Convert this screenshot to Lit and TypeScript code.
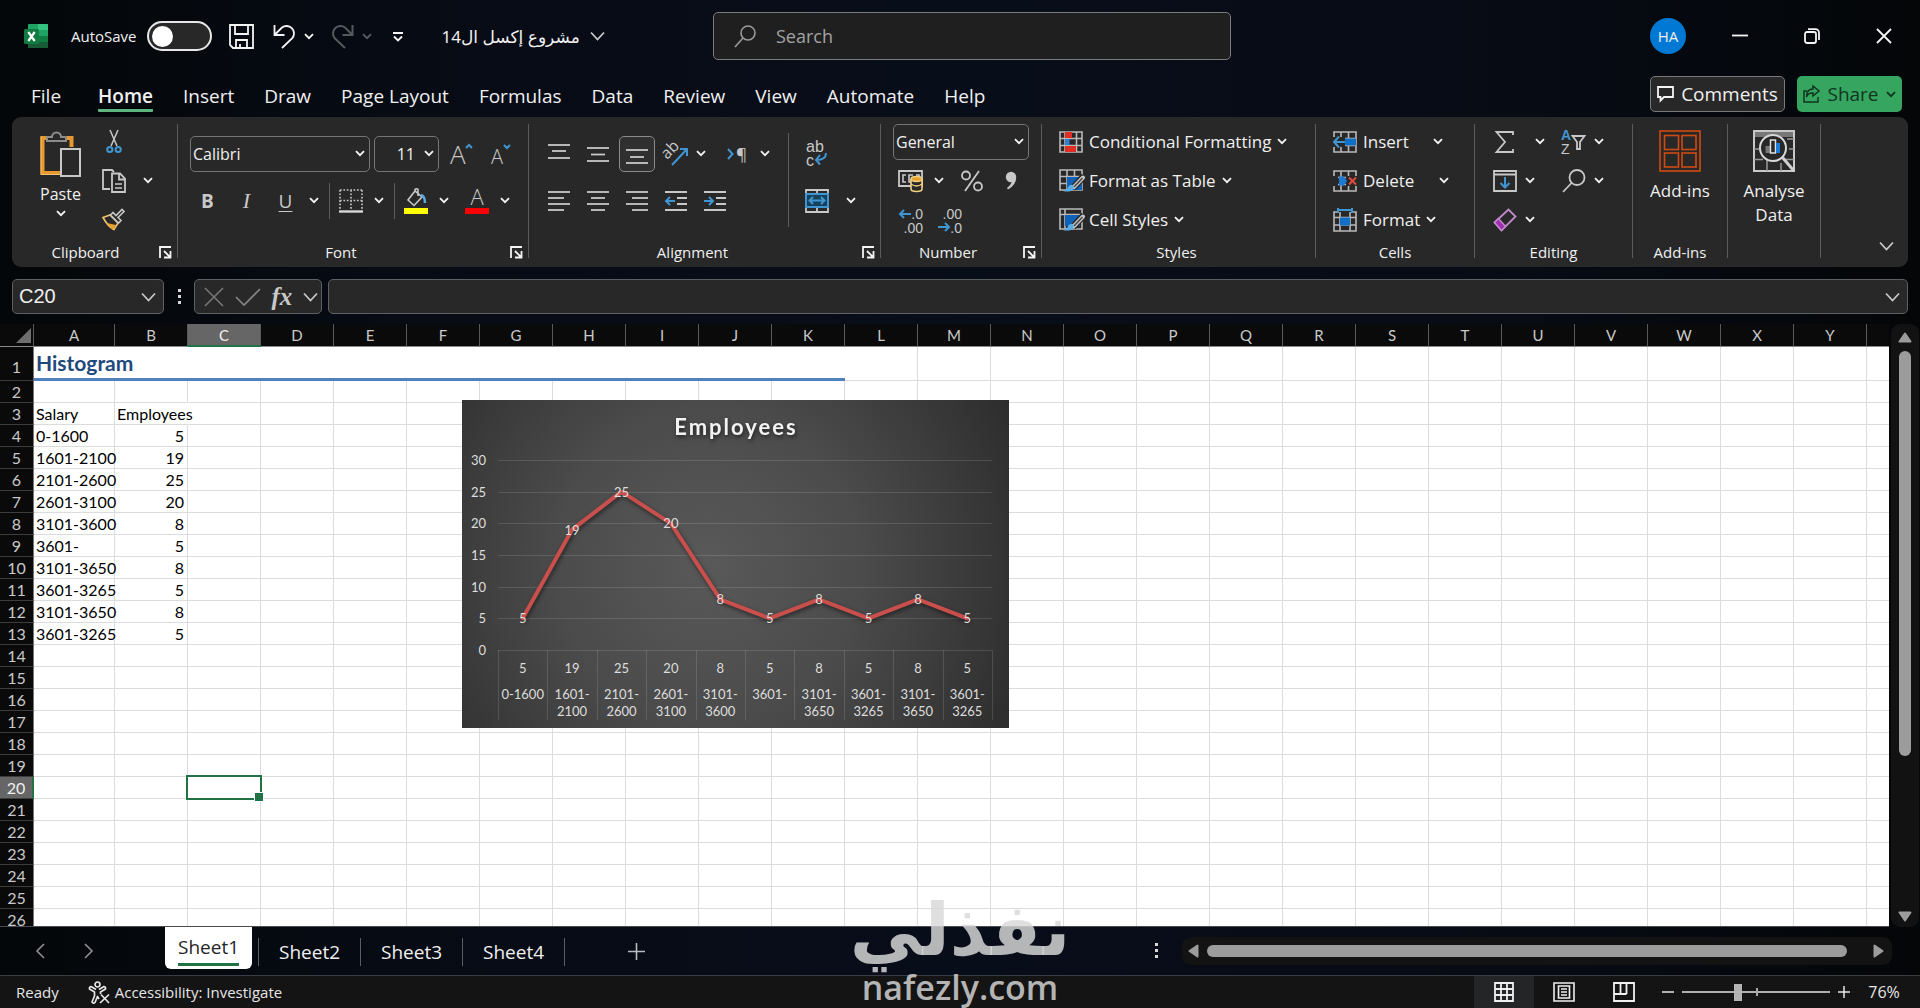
import { LitElement, html, svg, css, nothing } from "lit";
import { customElement } from "lit/decorators.js";

const icon = (w: number, h: number, body: unknown) =>
  html`<svg class="ic" width=${w} height=${h} viewBox="0 0 ${w} ${h}" aria-hidden="true">${body}</svg>`;

const chevron = (w = 10) =>
  w > 10
    ? icon(15, 10, svg`<path class="s2" d="M1 1.5 7.5 8.5 14 1.5"/>`)
    : icon(10, 7, svg`<path class="w2" d="M1 1.2 5 5.2 9 1.2"/>`);

const lines = (rows: [number, number, number][]) =>
  icon(22, 22, rows.map(([y, a, b]) => svg`<path class="s2" d="M${a} ${y}H${b}"/>`));

const icons = {
  logo: icon(24, 24, svg`
    <rect x="4" y="0" width="20" height="24" rx="1" fill="#21a366"/>
    <path d="M14 0h9a1 1 0 0 1 1 1v5H14z" fill="#33c481"/><path d="M14 6h10v6H14z" fill="#21a366"/>
    <path d="M4 12h10v12H5a1 1 0 0 1-1-1z" fill="#185c37"/><path d="M14 12h10v6H14z" fill="#107c41"/>
    <path d="M14 18h10v5a1 1 0 0 1-1 1h-9z" fill="#185c37"/>
    <rect x="0" y="5" width="15" height="15" rx="1.5" fill="#107c41"/>
    <path d="M4.300 8 10.700 17M10.700 8 4.300 17" stroke="#fff" stroke-width="2.200"/>`),
  save: icon(25, 25, svg`<path class="w2" d="M1 1h23v23H4l-3-3z"/><path class="w2" d="M6 1v9h13V1M7 24v-8h11v8M11 24v-4"/>`),
  undo: icon(23, 25, svg`<path class="w2" d="M1.500 1v10h10M2 10.500 9 3.500A7.500 7.500 0 0 1 19.500 14L9 24"/>`),
  redo: icon(23, 25, svg`<path d="M21.500 1v10h-10M21 10.500 14 3.500A7.500 7.500 0 0 0 3.500 14L14 24" fill="none" stroke="#55585d" stroke-width="2"/>`),
  more: icon(12, 10, svg`<path class="w2" d="M1 1H11M2 4.500 6 8.500 10 4.500"/>`),
  search: icon(22, 23, svg`<g fill="none" stroke="#9b9b9b" stroke-width="1.600"><circle cx="14" cy="8" r="7"/><path d="M9 13 1 22"/></g>`),
  min: icon(16, 16, svg`<path class="w2" d="M0 7.500H16"/>`),
  restore: icon(16, 16, svg`<rect class="w2" x="1" y="4" width="11" height="11" rx="2"/><path class="w2" d="M4 1.200h7.500a3.500 3.500 0 0 1 3.500 3.500V12"/>`),
  close: icon(16, 16, svg`<path class="w2" d="M1 1 15 15M15 1 1 15"/>`),
  comment: icon(17, 16, svg`<path class="w2" d="M1 1h15v10H7l-3.500 3.500V11H1z"/>`),
  share: icon(17, 18, svg`<path d="M4 6H1v11h14v-5M10 1l6 5-6 5V8C6 8 4 9.500 3.500 12 3.500 7 6 4 10 4z" fill="none" stroke="#10351f" stroke-width="1.500"/>`),
  paste: icon(42, 48, svg`
    <path d="M9 8H2.500V43H20M26 8h5.500V17" fill="none" stroke="#e8982c" stroke-width="4"/>
    <path d="M1 6.500V44.500H20" fill="none" stroke="#f3c173" stroke-width="1"/>
    <path d="M7 11V7h5a4.500 4.500 0 0 1 9 0h5v4z" fill="#282828" stroke="#8c8c8c" stroke-width="2"/>
    <rect x="21" y="19" width="19" height="27" fill="#282828" stroke="#c8c8c8" stroke-width="2"/>`),
  cut: icon(16, 25, svg`<path d="M4 1 11 17M12 1 5 17" stroke="#c8c8c8" stroke-width="1.500"/><g fill="none" stroke="#3f96d2" stroke-width="2"><circle cx="3.800" cy="20.500" r="2.600"/><circle cx="12.200" cy="20.500" r="2.600"/></g>`),
  copy: icon(24, 24, svg`<path class="s2" d="M8 20H1V1h9l2 2"/><path class="s2" d="M10 4.500h8l5 5V23H10zM17 4.500v6h6"/><path d="M13 15h7M13 19h7" stroke="#c8c8c8" stroke-width="1.500"/>`),
  painter: icon(25, 23, svg`<path d="M2 9.500 9 7l8 8-4 6.500C8 19 5 15 2 9.500z" fill="#282828" stroke="#f0c26e" stroke-width="1.600"/><path d="M6 15l9 2-3.500 5z" fill="#e8a02c"/><path d="M9.500 7 12 4.500l3 3 6-6 2 2-6 6 3 3-2.500 2.500z" fill="#282828" stroke="#c8c8c8" stroke-width="1.600"/>`),
  launcher: icon(13, 13, svg`<path class="w2" d="M1 12V1H12M5 5 11 11M11.500 5V11.500H5"/>`),
  growFont: icon(24, 26, svg`<text x="0" y="23" font-size="26" class="tx" font-weight="300">A</text><path class="b2" d="M16 7 19 4 22 7"/>`),
  shrinkFont: icon(22, 26, svg`<text x="1" y="23" font-size="20" class="tx" font-weight="300">A</text><path class="b2" d="M14 4 17 7 20 4"/>`),
  borders: icon(24, 24, svg`<g fill="none" stroke="#c8c8c8" stroke-width="1.600" stroke-dasharray="1.700 1.700"><path d="M1 1H23M1 1V21M23 1V21M12 1V21M1 11.500H23"/></g><path d="M0 22.500H24" stroke="#d8d8d8" stroke-width="2.400"/>`),
  fill: icon(24, 26, svg`<path d="M11 3 4 12l6 5.500 8-8.500zM11 3V1.500a1.800 1.800 0 0 1 3 0V8" fill="none" stroke="#c8c8c8" stroke-width="1.600"/><path d="M17 7q4 1 4 8" fill="none" stroke="#5aa9e0" stroke-width="2.500"/><rect y="20" width="24" height="6" fill="#ff0"/>`),
  fontColor: icon(24, 26, svg`<text x="12" y="17" text-anchor="middle" font-size="22" class="tx" font-weight="300">A</text><rect y="20" width="24" height="6" fill="#f00"/>`),
  top: lines([[2, 0, 22], [8, 4, 18], [15, 0, 22]]),
  middle: lines([[5, 0, 22], [11.5, 4, 18], [18, 0, 22]]),
  bottom: lines([[7, 0, 22], [14, 4, 18], [20, 0, 22]]),
  left: lines([[2, 0, 22], [8, 0, 16], [14, 0, 22], [20, 0, 16]]),
  center: lines([[2, 0, 22], [8, 4, 18], [14, 0, 22], [20, 4, 18]]),
  right: lines([[2, 0, 22], [8, 6, 22], [14, 0, 22], [20, 6, 22]]),
  outdent: icon(22, 22, svg`<path class="s2" d="M0 2H22M12 8H22M12 14H22M0 20H22"/><path class="b2" d="M10 11H1M5 7 1 11 5 15"/>`),
  indent: icon(22, 22, svg`<path class="s2" d="M0 2H22M12 8H22M12 14H22M0 20H22"/><path class="b2" d="M0 11H9M5 7 9 11 5 15"/>`),
  orient: icon(26, 26, svg`<text x="1" y="16" font-size="16" class="tx" transform="rotate(-45 6 14)">ab</text><path class="b2" d="M9 24 24 8M17 8H24V15"/>`),
  rtl: icon(20, 20, svg`<path class="b2" d="M1 5 5.500 10 1 15"/><text x="9" y="16" font-size="17" class="tx">¶</text>`),
  wrap: icon(22, 26, svg`<text x="0" y="11" font-size="16" class="tx li">ab</text><text x="0" y="25" font-size="16" class="tx li">c</text><path class="b2" d="M20 12q0 7-10 7M14 14 10 19 14 23.500"/>`),
  merge: icon(24, 24, svg`<path class="s2" d="M1 1H23V23H1zM12 1V5M12 19V23"/><rect x="1" y="5" width="22" height="13" fill="#17405c" stroke="#3f96d2" stroke-width="2"/><path class="b2" d="M4 11.500H20M8 8 4.500 11.500 8 15M16 8 19.500 11.500 16 15"/>`),
  currency: icon(26, 22, svg`<path class="s2" d="M1 1H24V16H1z"/><path d="M8 5H5V12H8M15 5H11V12H13M18 5H21V8" fill="none" stroke="#c8c8c8" stroke-width="1.600"/><path d="M13 9v10q0 2.500 5.500 2.500T24 19V9" fill="#282828" stroke="#f0d080" stroke-width="1.600"/><ellipse cx="18.500" cy="9" rx="5.500" ry="2.400" fill="#e8a02c" stroke="#f0d080" stroke-width="1.500"/><path d="M13 14q5.500 4 11 0" fill="none" stroke="#f0d080" stroke-width="1.500"/>`),
  percent: icon(24, 24, svg`<g fill="none" stroke="#c8c8c8" stroke-width="1.800"><circle cx="6" cy="6.500" r="4"/><circle cx="18" cy="17.500" r="4"/><path d="M19 2 5 22"/></g>`),
  comma: icon(14, 22, svg`<circle cx="7" cy="7" r="5.200" fill="#c8c8c8"/><path d="M12.200 7q0 8-8.200 12.500L3 18Q8 14 8 10z" fill="#c8c8c8"/>`),
  incDec: icon(26, 26, svg`<path class="b2" d="M13 7H2M6 3 2 7 6 11"/><text x="25" y="12" text-anchor="end" font-size="14" class="tx li">.0</text><text x="25" y="26" text-anchor="end" font-size="14" class="tx li">.00</text>`),
  decDec: icon(26, 26, svg`<path class="b2" d="M1 20H12M8 16 12 20 8 24"/><text x="25" y="12" text-anchor="end" font-size="14" class="tx li">.00</text><text x="25" y="26" text-anchor="end" font-size="14" class="tx li">.0</text>`),
  cond: icon(24, 22, svg`<path class="g2" d="M1 1H23V21H1zM1 7.500H23M1 14.500H23M6 1V21M17.500 1V21"/><rect x="6" y="1" width="7" height="6" fill="#e02d26"/><rect x="6" y="15" width="11" height="6" fill="#e02d26"/><rect x="6" y="8" width="4.500" height="6" fill="#2f7fd0"/>`),
  fmtTable: icon(24, 23, svg`<path class="g2" d="M1 1H23V21H1zM1 7.500H23M1 14.500H23M8 1V21M15.500 1V21"/><path d="M8 8H23V21H8z" fill="#0f62b5"/><path d="M25 7 14 19" stroke="#282828" stroke-width="7"/><path d="M24 8.500 15 18" stroke="#c8c8c8" stroke-width="4" stroke-linecap="round"/><path d="M23.500 9 15 18" stroke="#444" stroke-width="1.500"/><path d="M14 16q2 4-2 6-4 1-8 0 4-1 5-4 2-3 5-2z" fill="#58aee8"/>`),
  cellStyle: icon(24, 23, svg`<path class="g2" d="M1 1H23V21H1zM1 6.500H23M6 1V21"/><path d="M6 7H21V18H6z" fill="#0f62b5"/><path d="M25 7 14 19" stroke="#282828" stroke-width="7"/><path d="M24 8.500 15 18" stroke="#c8c8c8" stroke-width="4" stroke-linecap="round"/><path d="M23.500 9 15 18" stroke="#444" stroke-width="1.500"/><path d="M14 16q2 4-2 6-4 1-8 0 4-1 5-4 2-3 5-2z" fill="#58aee8"/>`),
  insert: icon(24, 22, svg`<path class="g2" d="M1 1H23V21H1zM1 7.500H23M1 14.500H23M8 1V21M15.500 1V21"/><path d="M10 7.500H23V14.500H10z" fill="#0f6fc9"/><path d="M0 6h12v10H0z" fill="#282828"/><path class="b2" d="M12 11H1M6 5.500 1 11 6 16.500"/>`),
  del: icon(24, 22, svg`<path class="g2" d="M1 1H23V21H1zM1 7.500H23M1 14.500H23M8 1V21M15.500 1V21"/><path d="M0 6h5v10H0zM13 6h11v10H13z" fill="#282828"/><path d="M6 6.500H11l3 4.500-3 4.500H6z" fill="#1b7ad6"/><path d="M16 7.500 23 14.500M23 7.500 16 14.500" stroke="#e04a3f" stroke-width="2"/>`),
  format: icon(24, 24, svg`<path class="g2" d="M4 4H1V23H23V4H20M1 9.500H23M1 17H23M7 4V23M17 4V23"/><rect x="7" y="9.500" width="10" height="8" fill="#0f6fc9"/><path class="b2" d="M5 2H19M5 0V5M19 0V5"/>`),
  sum: icon(20, 22, svg`<path class="s2" d="M18 4V1H1.500L10 11 1.500 21H18V18"/>`),
  sort: icon(25, 26, svg`<text x="0" y="11" font-size="14" font-weight="700" fill="#3f96d2" class="li">A</text><text x="0" y="25" font-size="14" class="tx li">Z</text><path class="s2" d="M11.500 7H23.500L19 13V20H16V13z"/>`),
  down: icon(24, 22, svg`<path class="s2" d="M1 1H23V21H1zM1 4.500H23"/><path class="b2" d="M12 7V17.500M7.500 13 12 17.500 16.500 13"/>`),
  find: icon(24, 24, svg`<circle class="s2" cx="15" cy="8.500" r="7.500"/><path class="s2" d="M9.500 14 1 23"/>`),
  erase: icon(24, 24, svg`<path d="M1.500 14.500 15.500 1.500 22.500 8.500 8.500 22.500z" fill="none" stroke="#c488cc" stroke-width="1.800"/><path d="M1.500 14.500 5.500 10.500 12.500 18.500 8.500 22.500z" fill="#9b2fae" stroke="#c488cc" stroke-width="1.500"/>`),
  addins: icon(42, 42, svg`<g fill="none" stroke="#d04a12" stroke-width="1.600"><rect x="1" y="1" width="40" height="40"/><rect x="5.500" y="5.500" width="14" height="14"/><rect x="23" y="5.500" width="14" height="14"/><rect x="5.500" y="23" width="14" height="14"/><rect x="23" y="23" width="14" height="14"/></g>`),
  analyse: icon(42, 42, svg`<rect x="1" y="1" width="40" height="40" fill="none" stroke="#c8c8c8" stroke-width="2"/><path d="M2 4.500H40" stroke="#777" stroke-width="5"/><path d="M1 19H6M36 19H41M1 29.500H10M30 29.500H41M14 30V41M28 33V41M34 9H41" stroke="#999" stroke-width="1.500"/><circle cx="20" cy="18" r="13" fill="#282828" stroke="#d8d8d8" stroke-width="2"/><rect x="12.500" y="16" width="4.500" height="7" fill="#777"/><rect x="17.500" y="10" width="5" height="13" fill="#282828" stroke="#e0e0e0" stroke-width="1.500"/><rect x="23" y="13" width="4" height="10" fill="#1f7fd8"/><path d="M29.500 27.500 41 41" stroke="#d0d0d0" stroke-width="3"/>`),
  cancel: icon(20, 20, svg`<path d="M1 1 19 19M19 1 1 19" stroke="#777" stroke-width="1.600"/>`),
  check: icon(26, 18, svg`<path d="M1 9 9 17 25 1" fill="none" stroke="#858585" stroke-width="1.600"/>`),
  prev: icon(9, 16, svg`<path d="M8 1 1 8 8 15" fill="none" stroke="#8b8f98" stroke-width="1.600"/>`),
  next: icon(9, 16, svg`<path d="M1 1 8 8 1 15" fill="none" stroke="#8b8f98" stroke-width="1.600"/>`),
  plus: icon(17, 17, svg`<path d="M8.500 0V17M0 8.500H17" stroke="#b8bbc0" stroke-width="1.600"/>`),
  zoomIn: icon(12, 12, svg`<path d="M6 0V12M0 6H12" stroke="#e6e6e6" stroke-width="1.500"/>`),
  zoomOut: icon(12, 12, svg`<path d="M0 6H12" stroke="#e6e6e6" stroke-width="1.500"/>`),
  dots: icon(4, 16, svg`<path d="M0 0h3v3H0zM0 6h3v3H0zM0 12h3v3H0z" fill="#d8d8d8"/>`),
  access: icon(22, 23, svg`<g fill="none" stroke="#e6e6e6" stroke-width="1.700" stroke-linejoin="round"><circle cx="9.500" cy="3.500" r="2.500"/><path d="M8 8.500 3 5.500Q1 6 1.500 8L6.500 11V15L4 21q1.500 2 3 .5L9.500 15.500 11 18M11 8.500 16 5.500q2 .5 1.500 2.500L12.500 11V13"/><path d="M13 13.500 21 22M21 13.500 12 22"/></g>`),
  viewGrid: icon(20, 20, svg`<path d="M1 1H19V19H1zM1 7H19M1 13H19M7 1V19M13 1V19" fill="none" stroke="#f0f0f0" stroke-width="1.800"/>`),
  viewPage: icon(22, 20, svg`<path d="M1 1H21V19H1zM5.500 4H16.500V16H5.500zM8 7H14M8 10H14M8 13H14" fill="none" stroke="#f0f0f0" stroke-width="1.600"/>`),
  viewBreak: icon(22, 20, svg`<path d="M1 1H21V19H1zM7.500 1V12M13.500 1V12M1 12H13.500" fill="none" stroke="#f0f0f0" stroke-width="1.800"/>`),
  triUp: icon(14, 11, svg`<path class="tri" d="M7 1.500 12.500 9.500H1.500z"/>`),
  triDown: icon(14, 11, svg`<path class="tri" d="M7 9.500 12.500 1.500H1.500z"/>`),
  triLeft: icon(11, 14, svg`<path class="tri" d="M1.500 7 9.500 1.500V12.500z"/>`),
  triRight: icon(11, 14, svg`<path class="tri" d="M9.500 7 1.500 1.500V12.500z"/>`),
};

const shared = css`
  :host, * { box-sizing: border-box; }
  button, select, input { font: inherit; color: inherit; background: none; border: 0; padding: 0; margin: 0; }
  button { display: flex; align-items: center; justify-content: center; white-space: nowrap; }
  .ic { display: block; flex: none; overflow: visible; }
  .s2 { fill: none; stroke: #c8c8c8; stroke-width: 1.8; }
  .w2 { fill: none; stroke: #f4f4f4; stroke-width: 1.8; }
  .g2 { fill: none; stroke: #b9b9b9; stroke-width: 1.6; }
  .b2 { fill: none; stroke: #3f96d2; stroke-width: 2; }
  .tx { fill: #c8c8c8; font-family: "Open Sans", sans-serif; }
  .li { font-family: "Liberation Sans", sans-serif; }
  .tri { fill: #9c9c9c; stroke: #9c9c9c; stroke-width: 2; stroke-linejoin: round; }
`;

@customElement("title-bar")
class TitleBar extends LitElement {
  static styles = [shared, css`
    :host { display: grid; grid-template-columns: 1fr 518px 1fr; align-items: center; height: 72px; padding-left: 24px; }
    .left { display: flex; align-items: center; }
    .auto { display: flex; align-items: center; gap: 10px; margin: 0 17px 0 23px; font-size: 15px; }
    .toggle { appearance: none; width: 65px; height: 30px; border: 2px solid #e8e8e8; border-radius: 15px; background: #282828; display: flex; align-items: center; padding-left: 3px; }
    .toggle::before { content: ""; width: 21px; height: 21px; border-radius: 50%; background: #fff; }
    .pair { display: flex; gap: 8px; margin-left: 19px; }
    .pair + .pair { margin-left: 17px; }
    .dim { opacity: 0.35; }
    .more { margin: 2px 38px 0 20px; }
    .doc { gap: 10px; font-size: 17px; font-family: "Noto Sans", "DejaVu Sans", sans-serif; }
    .search { display: flex; align-items: center; gap: 20px; height: 48px; padding: 0 20px; border: 1px solid #7b7b7b; border-radius: 5px; background: #1f1f1f; }
    .search input { flex: 1; min-width: 0; outline: none; font-size: 18px; }
    .search input::placeholder { color: #a3a3a3; opacity: 1; }
    .right { display: flex; align-items: center; justify-content: flex-end; gap: 28px; padding-right: 14px; }
    .avatar { width: 36px; height: 36px; margin-right: 4px; border-radius: 50%; background: #0078d4; font-size: 15px; }
    .win { width: 44px; height: 36px; }
  `];
  render() {
    return html`
      <div class="left">
        ${icons.logo}
        <label class="auto">AutoSave <input class="toggle" type="checkbox" role="switch" /></label>
        <button aria-label="Save">${icons.save}</button>
        <div class="pair"><button aria-label="Undo">${icons.undo}</button><button aria-label="Undo list">${chevron()}</button></div>
        <div class="pair"><button aria-label="Redo">${icons.redo}</button><button class="dim" aria-label="Redo list">${chevron()}</button></div>
        <button class="more" aria-label="Customise toolbar">${icons.more}</button>
        <button class="doc"><bdi>مشروع إكسل ال14</bdi>${chevron(15)}</button>
      </div>
      <label class="search">${icons.search}<input type="text" placeholder="Search" aria-label="Search" /></label>
      <div class="right">
        <button class="avatar" aria-label="Account">HA</button>
        <button class="win" aria-label="Minimise">${icons.min}</button>
        <button class="win" aria-label="Restore">${icons.restore}</button>
        <button class="win" aria-label="Close">${icons.close}</button>
      </div>`;
  }
}

const TABS = ["File", "Home", "Insert", "Draw", "Page Layout", "Formulas", "Data", "Review", "View", "Automate", "Help"];

@customElement("ribbon-tabs")
class RibbonTabs extends LitElement {
  static styles = [shared, css`
    :host { display: flex; justify-content: space-between; align-items: flex-start; height: 45px; padding: 4px 18px 0 31px; font-size: 19px; }
    nav { display: flex; gap: 30px; }
    .tab { height: 36px; padding-top: 7px; border-bottom: 3px solid transparent; border-radius: 1px; }
    .on { margin-left: 7px; font-weight: 600; border-color: #5fb37e; }
    .acts { display: flex; gap: 12px; }
    .act { height: 36px; border-radius: 5px; gap: 7px; }
    .comments { width: 135px; border: 1px solid #7b7b7b; background: #282828; }
    .share { width: 105px; background: #36a55f; color: #10351f; }
    .share .w2 { stroke: #10351f; }
  `];
  render() {
    return html`
      <nav>${TABS.map((t) => html`<button class="tab ${t === "Home" ? "on" : ""}">${t}</button>`)}</nav>
      <div class="acts">
        <button class="act comments">${icons.comment}Comments</button>
        <button class="act share">${icons.share}Share ${chevron()}</button>
      </div>`;
  }
}

const btn = (name: string, ic: unknown, cls = "") => html`<button class="b ${cls}" aria-label=${name}>${ic}</button>`;
const drop = (name: string, cls = "") => html`<button class="c ${cls}" aria-label="${name} options">${chevron()}</button>`;
const group = (cls: string, label: string, body: unknown, launcher = false) => html`
  <section class="group ${cls}">
    <div class="body">${body}</div>
    <footer>${label}${launcher ? html`<button class="launch" aria-label="${label} settings">${icons.launcher}</button>` : nothing}</footer>
  </section>
  <div class="rule"></div>`;
const picker = (cls: string, name: string, value: string) => html`
  <div class="field ${cls}"><select aria-label=${name}><option>${value}</option></select>${chevron()}</div>`;
const wide = (ic: unknown, text: string, cls = "") => html`<button class="wide ${cls}">${ic}<span>${text}</span>${chevron()}</button>`;

@customElement("ribbon-panel")
class RibbonPanel extends LitElement {
  static styles = [shared, css`
    :host { display: flex; height: 150px; margin: 0 12px; border-radius: 9px; background: #282828; font-size: 17px; }
    .group { display: flex; flex-direction: column; flex: none; }
    .rule { width: 1px; margin: 7px 0 9px; background: #5c5c5c; }
    .body { display: flex; height: 122px; }
    footer { position: relative; height: 27px; line-height: 27px; text-align: center; font-size: 15px; }
    .launch { position: absolute; right: 5px; top: 7px; }
    .row { display: flex; align-items: center; height: 47px; }
    .three .row { height: 39px; }
    .three { padding-top: 5px; }
    .two { padding-top: 13px; }
    .b { width: 39px; height: 36px; }
    .c { width: 18px; height: 36px; }
    .slim { width: 12px; }
    .on { border: 1px solid #8a8a8a; border-radius: 5px; width: 36px; margin: 0 1px 0 2px; background: #303030; }
    .v { width: 1px; height: 36px; background: #5c5c5c; margin: 0 1px 0 6px; }
    .field { display: flex; align-items: center; height: 36px; padding-right: 4px; border: 1px solid #767676; border-radius: 5px; font-size: 16px; }
    .field select { appearance: none; flex: 1; min-width: 0; height: 100%; padding-left: 2px; outline: none; }
    .field option { background: #282828; }
    .big { flex-direction: column; gap: 7px; line-height: 24px; white-space: normal; }
    .wide { gap: 6px; justify-content: flex-start; height: 36px; }

    .clip { width: 165px; }
    .clip .body { gap: 12px; padding-left: 27px; }
    .clip .big { justify-content: flex-start; padding-top: 13px; gap: 4px; width: 43px; font-size: 16px; }
    .clip footer { padding-right: 18px; }
    .font { width: 350px; }
    .font .two { padding-left: 10px; }
    .face { width: 180px; margin: 0 4px 0 2px; }
    .size { width: 65px; }
    .size select { text-align-last: right; padding-right: 9px; }
    .gap4 { margin-left: 4px; }
    .gap3 { margin-left: 3px; }
    .letter { font-size: 19px; color: #c8c8c8; }
    .bold { font-weight: 700; }
    .ital { font-style: italic; font-family: "Liberation Serif", serif; font-size: 22px; }
    .under { text-decoration: underline; text-underline-offset: 3px; }
    .font footer, .align footer { padding-right: 24px; }
    .align { width: 351px; }
    .align .two { padding-left: 10px; width: 259px; }
    .align .two + .vr + .two { padding-left: 8px; width: auto; }
    .vr { width: 1px; height: 94px; margin-top: 16px; background: #5c5c5c; }
    .gap10 { margin-left: 10px; }
    .gap6 { margin-left: 6px; }
    .number { width: 160px; }
    .number .three { padding-left: 10px; }
    .number footer { padding-right: 26px; }
    .fmt { width: 136px; margin-left: 2px; }
    .styles { width: 273px; }
    .styles .three, .cells .three { padding-left: 17px; }
    .styles footer { padding-right: 4px; }
    .cells { width: 158px; }
    .far { width: 110px; }
    .farther { width: 116px; }
    .far span, .farther span { flex: 1; text-align: left; }
    .edit { width: 157px; }
    .edit .three { padding-left: 10px; width: 87px; }
    .edit .three + .three { padding-left: 0; }
    .add { width: 94px; }
    .ana { width: 92px; }
    .add .big, .ana .big { flex: 1; justify-content: flex-start; padding-top: 13px; }
    .end { flex: 1; display: flex; justify-content: flex-end; align-items: flex-end; padding: 0 14px 16px 0; }
  `];
  render() {
    return html`
      ${group("clip", "Clipboard", html`
        <button class="big">${icons.paste}<span>Paste</span>${chevron()}</button>
        <div class="three">
          <div class="row">${btn("Cut", icons.cut)}</div>
          <div class="row">${btn("Copy", icons.copy)}${drop("Copy", "gap6")}</div>
          <div class="row">${btn("Format painter", icons.painter)}</div>
        </div>`, true)}
      ${group("font", "Font", html`
        <div class="two">
          <div class="row">${picker("face", "Font name", "Calibri")}${picker("size", "Font size", "11")}
            ${btn("Increase font size", icons.growFont, "gap3")}${btn("Decrease font size", icons.shrinkFont)}</div>
          <div class="row">
            <button class="b letter bold">B</button><button class="b letter ital">I</button><button class="b letter under">U</button>${drop("Underline")}
            <div class="v"></div>${btn("Borders", icons.borders)}${drop("Borders")}
            <div class="v"></div>${btn("Fill colour", icons.fill)}${drop("Fill colour")}${btn("Font colour", icons.fontColor, "gap4")}${drop("Font colour")}
          </div>
        </div>`, true)}
      ${group("align", "Alignment", html`
        <div class="two">
          <div class="row">${btn("Top align", icons.top)}${btn("Middle align", icons.middle)}${btn("Bottom align", icons.bottom, "on")}
            ${btn("Orientation", icons.orient)}${drop("Orientation", "slim")}${btn("Text direction", icons.rtl, "gap10")}${drop("Text direction")}</div>
          <div class="row">${btn("Align left", icons.left)}${btn("Centre", icons.center)}${btn("Align right", icons.right)}
            ${btn("Decrease indent", icons.outdent)}${btn("Increase indent", icons.indent)}</div>
        </div>
        <div class="vr"></div>
        <div class="two">
          <div class="row">${btn("Wrap text", icons.wrap)}</div>
          <div class="row">${btn("Merge", icons.merge)}${drop("Merge", "gap6")}</div>
        </div>`, true)}
      ${group("number", "Number", html`
        <div class="three">
          <div class="row">${picker("fmt", "Number format", "General")}</div>
          <div class="row">${btn("Currency", icons.currency)}${drop("Currency")}${btn("Percent", icons.percent, "gap4")}${btn("Comma style", icons.comma)}</div>
          <div class="row">${btn("Increase decimal", icons.incDec)}${btn("Decrease decimal", icons.decDec)}</div>
        </div>`, true)}
      ${group("styles", "Styles", html`
        <div class="three">
          <div class="row">${wide(icons.cond, "Conditional Formatting")}</div>
          <div class="row">${wide(icons.fmtTable, "Format as Table")}</div>
          <div class="row">${wide(icons.cellStyle, "Cell Styles")}</div>
        </div>`)}
      ${group("cells", "Cells", html`
        <div class="three">
          <div class="row">${wide(icons.insert, "Insert", "far")}</div>
          <div class="row">${wide(icons.del, "Delete", "farther")}</div>
          <div class="row">${wide(icons.format, "Format")}</div>
        </div>`)}
      ${group("edit", "Editing", html`
        <div class="three">
          <div class="row">${btn("AutoSum", icons.sum)}${drop("AutoSum", "slim gap10")}</div>
          <div class="row">${btn("Fill", icons.down)}${drop("Fill", "slim")}</div>
          <div class="row">${btn("Clear", icons.erase)}${drop("Clear", "slim")}</div>
        </div>
        <div class="three">
          <div class="row">${btn("Sort and filter", icons.sort)}${drop("Sort", "slim")}</div>
          <div class="row">${btn("Find and select", icons.find)}${drop("Find", "slim")}</div>
        </div>`)}
      ${group("add", "Add-ins", html`<button class="big">${icons.addins}<span>Add-ins</span></button>`)}
      ${group("ana", "", html`<button class="big">${icons.analyse}<span>Analyse<br />Data</span></button>`)}
      <div class="end"><button aria-label="Collapse ribbon">${chevron(15)}</button></div>`;
  }
}

@customElement("formula-bar")
class FormulaBar extends LitElement {
  static styles = [shared, css`
    :host { display: flex; align-items: center; height: 35px; margin: 12px 12px 10px; }
    .box { display: flex; align-items: center; height: 35px; border: 1px solid #5f6064; border-radius: 5px; background: #282828; }
    .box input { flex: 1; min-width: 0; outline: none; height: 100%; }
    .name { width: 152px; padding: 0 7px 0 6px; font-family: "Liberation Sans", sans-serif; font-size: 20px; }
    .dots { margin: 0 12px 0 14px; }
    .fn { width: 128px; justify-content: space-between; padding: 0 3px 0 9px; margin-right: 6px; }
    .fx { font: italic 700 25px "Liberation Serif", serif; color: #c8c8c8; }
    .line { flex: 1; padding: 0 7px 0 8px; font-size: 18px; }
  `];
  render() {
    return html`
      <div class="box name"><input type="text" aria-label="Name box" .value=${"C20"} /><button aria-label="Names">${chevron(15)}</button></div>
      <span class="dots">${icons.dots}</span>
      <div class="box fn">
        <button aria-label="Cancel">${icons.cancel}</button>
        <button aria-label="Enter">${icons.check}</button>
        <button class="fx" aria-label="Insert function">fx</button>
        <button aria-label="Functions">${chevron(15)}</button>
      </div>
      <div class="box line"><input type="text" aria-label="Formula" /><button aria-label="Expand">${chevron(15)}</button></div>`;
  }
}

const DATA: [string, number][] = [
  ["0-1600", 5], ["1601-2100", 19], ["2101-2600", 25], ["2601-3100", 20], ["3101-3600", 8],
  ["3601-", 5], ["3101-3650", 8], ["3601-3265", 5], ["3101-3650", 8], ["3601-3265", 5],
];

@customElement("employees-chart")
class EmployeesChart extends LitElement {
  static styles = css`
    :host { display: block; width: 547px; height: 328px; background: radial-gradient(ellipse 70% 120% at 45% 50%, #595959 0%, #4b4b4b 40%, #262626 100%); }
    svg { display: block; font-family: Lato, sans-serif; font-size: 13px; fill: #dedede; }
    .title { font-size: 22px; font-weight: 700; letter-spacing: 2px; fill: #f2f2f2; filter: drop-shadow(1px 2px 2px #0009); }
    .grid { stroke: #fff; stroke-opacity: 0.13; }
    .series { fill: none; stroke: #c94f4c; stroke-width: 4; stroke-linejoin: round; stroke-linecap: round; filter: drop-shadow(1px 2px 2px #0008); }
    .mid { text-anchor: middle; }
    .end { text-anchor: end; }
  `;
  render() {
    const left = 36, step = 49.4, zero = 250;
    const x = (i: number) => left + step * (i + 0.5);
    const y = (v: number) => zero - (v * 190) / 30;
    return html`<svg width="547" height="328" viewBox="0 0 547 328" role="img" aria-label="Employees line chart">
      <text class="title mid" x="274" y="35">Employees</text>
      ${[0, 5, 10, 15, 20, 25, 30].map((v) => svg`<path class="grid" d="M${left} ${Math.round(y(v)) + 0.5}h494"/><text class="end" x="24" y=${y(v) + 5}>${v}</text>`)}
      ${Array.from({ length: 11 }, (_, i) => svg`<path class="grid" d="M${Math.round(left + step * i) + 0.5} 250v70"/>`)}
      <polyline class="series" points=${DATA.map(([, v], i) => `${x(i)},${y(v)}`).join(" ")}></polyline>
      ${DATA.map(([name, v], i) => {
        const m = /^(\d{4}-)(\d{4})$/.exec(name);
        return svg`
          <text class="mid" x=${x(i)} y=${y(v) + 5}>${v}</text>
          <text class="mid" x=${x(i)} y="273">${v}</text>
          <text class="mid" x=${x(i)} y="299">${m ? m[1] : name}</text>
          ${m ? svg`<text class="mid" x=${x(i)} y="316">${m[2]}</text>` : nothing}`;
      })}
    </svg>`;
  }
}

const COLS = [..."ABCDEFGHIJKLMNOPQRSTUVWXYZ"];

@customElement("sheet-grid")
class SheetGrid extends LitElement {
  static styles = [shared, css`
    :host { display: flex; flex: 1; min-height: 0; }
    .pane { position: relative; flex: 1; min-width: 0; overflow: hidden; font-family: Lato, sans-serif; border-bottom: 1px solid #4a4b50; }
    table { table-layout: fixed; border-collapse: separate; border-spacing: 0; width: 1940px; }
    .c0 { width: 34px; } .c1 { width: 81px; } .cn { width: 73px; }
    th { font-weight: 400; padding: 0; text-align: center; color: #c9c9c9; background: #0a0a0a; border-right: 1px solid #5a5a5a; border-bottom: 1px solid #3c3c3c; }
    thead th { height: 23px; font-size: 15px; line-height: 20px; border-bottom-color: #8a8a8a; }
    tbody th { font-size: 16px; line-height: 21px; border-right-color: #777; }
    .corner { vertical-align: bottom; }
    .corner .ic { margin-left: 16px; margin-bottom: 3px; }
    thead .sel { background: #666; color: #f0f0f0; border-bottom: 2px solid #217346; }
    tbody .sel { background: #666; color: #f0f0f0; border-right: 2px solid #217346; }
    td { height: 22px; padding: 0 3px 0 2px; font-size: 16px; line-height: 21px; color: #000; background: #fff; border-right: 1px solid #dcdcdc; border-bottom: 1px solid #dcdcdc; white-space: nowrap; }
    .first td, .first th { height: 34px; }
    .first th { padding-top: 6px; }
    td.head { border-right: 0; border-bottom: 3px solid #4f81bd; }
    .h1 { font-size: 21px; font-weight: 700; color: #1f497d; }
    .num { text-align: right; }
    td.over { border-right-color: #fff; }
    .cur { position: relative; }
    .cur::before { content: ""; position: absolute; inset: -2px; border: 2px solid #217346; }
    .cur::after { content: ""; position: absolute; right: -4px; bottom: -4px; width: 8px; height: 8px; background: #217346; border: 1px solid #fff; }
    employees-chart { position: absolute; left: 462px; top: 76px; }
    .bar { display: flex; flex-direction: column; align-items: center; width: 28px; margin: 0 1px 0 2px; padding: 8px 0 5px; border-radius: 9px; background: #121212; }
    .thumb { width: 12px; margin: 8px 0 auto; flex: 0 1 405px; border-radius: 6px; background: #9c9c9c; }
  `];
  cell(r: number, c: number) {
    if (r === 1) return c < 11 ? html`<td class="head ${c === 0 ? "h1" : ""}">${c === 0 ? "Histogram" : nothing}</td>` : html`<td></td>`;
    if (r === 20 && c === 2) return html`<td class="cur"></td>`;
    if (r === 3 && c < 2) return html`<td class=${c ? "over" : ""}>${c ? "Employees" : "Salary"}</td>`;
    const row = DATA[r - 4];
    if (row && c === 0) return html`<td>${row[0]}</td>`;
    if (row && c === 1) return html`<td class="num">${row[1]}</td>`;
    return html`<td></td>`;
  }
  render() {
    return html`
      <div class="pane">
        <table>
          <colgroup><col class="c0" />${COLS.map((_, i) => html`<col class=${i ? "cn" : "c1"} />`)}</colgroup>
          <thead><tr>
            <th class="corner" aria-label="Select all">${icon(15, 15, svg`<path d="M15 0V15H0z" fill="#6e6e6e"/>`)}</th>
            ${COLS.map((c) => html`<th class=${c === "C" ? "sel" : ""}>${c}</th>`)}
          </tr></thead>
          <tbody>${Array.from({ length: 26 }, (_, i) => i + 1).map((r) => html`
            <tr class=${r === 1 ? "first" : ""}><th class=${r === 20 ? "sel" : ""}>${r}</th>${COLS.map((_, c) => this.cell(r, c))}</tr>`)}
          </tbody>
        </table>
        <employees-chart></employees-chart>
      </div>
      <div class="bar">
        <button aria-label="Scroll up">${icons.triUp}</button>
        <div class="thumb"></div>
        <button aria-label="Scroll down">${icons.triDown}</button>
      </div>`;
  }
}

@customElement("sheet-tabs")
class SheetTabs extends LitElement {
  static styles = [shared, css`
    :host { display: flex; align-items: center; height: 49px; padding-right: 28px; font-size: 19px; border-bottom: 1px solid #3b3d44; }
    .arrows { display: flex; gap: 39px; width: 165px; padding-left: 36px; }
    nav { display: flex; align-items: flex-start; align-self: flex-start; }
    .on { height: 42px; width: 87px; margin-right: 6px; border-radius: 0 0 6px 6px; background: #fff; color: #262626; }
    .on span { line-height: 32px; border-bottom: 3px solid #217346; }
    .tab { width: 102px; height: 28px; margin-top: 11px; border-right: 1px solid #5a5d66; }
    .tab.one { border-left: 1px solid #5a5d66; width: 103px; }
    .add { margin-left: 63px; }
    .dots { margin: 0 23px 0 auto; }
    .bar { display: flex; align-items: center; width: 710px; height: 28px; padding: 0 8px 0 6px; border-radius: 9px; background: #131313; }
    .thumb { flex: 0 0 640px; height: 12px; margin: 0 auto 0 8px; border-radius: 6px; background: #9c9c9c; }
  `];
  render() {
    return html`
      <div class="arrows"><button aria-label="Previous sheet">${icons.prev}</button><button aria-label="Next sheet">${icons.next}</button></div>
      <nav>
        <button class="on"><span>Sheet1</span></button>
        ${["Sheet2", "Sheet3", "Sheet4"].map((t, i) => html`<button class="tab ${i ? "" : "one"}">${t}</button>`)}
      </nav>
      <button class="add" aria-label="New sheet">${icons.plus}</button>
      <span class="dots">${icons.dots}</span>
      <div class="bar">
        <button aria-label="Scroll left">${icons.triLeft}</button>
        <div class="thumb"></div>
        <button aria-label="Scroll right">${icons.triRight}</button>
      </div>`;
  }
}

@customElement("status-bar")
class StatusBar extends LitElement {
  static styles = [shared, css`
    :host { display: flex; align-items: center; height: 32px; padding: 0 20px 0 16px; background: #141414; font-size: 15px; color: #e6e6e6; }
    .acc { gap: 5px; margin-left: 29px; }
    .views { display: flex; margin-left: auto; align-self: stretch; }
    .view { width: 60px; }
    .on { background: #242526; }
    .zoom { appearance: none; width: 148px; height: 18px; margin: 0 8px; background: linear-gradient(#a8a8a8, #a8a8a8) 74px 50% / 2px 8px no-repeat, linear-gradient(#b0b0b0, #b0b0b0) 0 50% / 100% 2px no-repeat; }
    .zoom::-webkit-slider-thumb { appearance: none; width: 8px; height: 17px; background: #b4b4b4; }
    .out { margin-left: 8px; }
    .pct { margin-left: 18px; font-size: 16px; min-width: 32px; }
  `];
  render() {
    return html`
      <span>Ready</span>
      <button class="acc">${icons.access}Accessibility: Investigate</button>
      <div class="views">
        <button class="view on" aria-label="Normal">${icons.viewGrid}</button>
        <button class="view" aria-label="Page layout">${icons.viewPage}</button>
        <button class="view" aria-label="Page break">${icons.viewBreak}</button>
      </div>
      <button class="out" aria-label="Zoom out">${icons.zoomOut}</button>
      <input class="zoom" type="range" min="0" max="100" value="37" aria-label="Zoom" />
      <button aria-label="Zoom in">${icons.zoomIn}</button>
      <button class="pct">76%</button>`;
  }
}

@customElement("app-root")
class AppRoot extends LitElement {
  static styles = css`
    :host {
      position: relative; display: flex; flex-direction: column; height: 100vh; min-height: 600px; overflow: hidden;
      color: #f0f0f0; font-family: "Open Sans", "Noto Sans", sans-serif;
      background: linear-gradient(90deg, #040709, #060b14 20%, #080d1a 50%, #060b14 80%, #040608);
    }
    .mark {
      position: absolute; left: 50%; bottom: 0; transform: translateX(-50%); text-align: center; pointer-events: none;
      color: rgba(217, 217, 217, 0.83); font-weight: 700;
    }
    .ar { font-family: "DejaVu Sans", sans-serif; font-size: 72px; line-height: 72px; }
    .en { font-family: "Open Sans", sans-serif; font-size: 34px; font-weight: 600; line-height: 42px; }
  `;
  render() {
    return html`
      <title-bar></title-bar>
      <ribbon-tabs></ribbon-tabs>
      <ribbon-panel></ribbon-panel>
      <formula-bar></formula-bar>
      <sheet-grid></sheet-grid>
      <sheet-tabs></sheet-tabs>
      <status-bar></status-bar>
      <div class="mark"><div class="ar" lang="ar" dir="rtl">نفذلي</div><div class="en">nafezly.com</div></div>`;
  }
}
